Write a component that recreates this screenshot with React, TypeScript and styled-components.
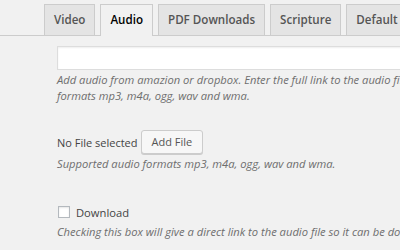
import React from "react";
import styled, { createGlobalStyle } from "styled-components";

const Global = createGlobalStyle`
  html, body { margin: 0; padding: 0; }
  body {
    background: #f1f1f1;
    font-family: "Open Sans", "Noto Sans", sans-serif;
    color: #444;
    overflow: hidden;
    width: 400px;
    height: 250px;
  }
`;

const Page = styled.div`
  width: 400px;
  height: 250px;
  overflow: hidden;
`;

const TabBar = styled.nav`
  display: flex;
  gap: 5px;
  padding: 4px 0 0 44px;
  border-bottom: 1px solid #ccc;
  white-space: nowrap;
  height: 31px;
`;

const Tab = styled.div<{ $active?: boolean }>`
  flex: none;
  box-sizing: border-box;
  padding: 0 9px;
  line-height: 30px;
  font-size: 11.6px;
  font-weight: 600;
  border: 1px solid #ccc;
  border-bottom: none;
  background: ${(p) => (p.$active ? "#f1f1f1" : "#e4e4e4")};
  color: ${(p) => (p.$active ? "#000" : "#555")};
  margin-bottom: ${(p) => (p.$active ? "-1px" : "0")};
  height: ${(p) => (p.$active ? "32px" : "31px")};
`;

const Content = styled.div`
  padding: 10px 0 0 57px;
  white-space: nowrap;
`;

const UrlInput = styled.input`
  display: block;
  width: 400px;
  height: 24px;
  box-sizing: border-box;
  border: 1px solid #ddd;
  background: #fff;
  box-shadow: inset 0 1px 2px rgba(0, 0, 0, 0.07);
  margin: 0;
  padding: 0 6px;
  outline: none;
`;

const Desc = styled.p<{ $top?: number }>`
  margin: ${(p) => p.$top ?? 2}px 0 0;
  font-size: 11.2px;
  line-height: 16px;
  font-style: italic;
  color: #6e6e6e;
`;

const FileRow = styled.div`
  display: flex;
  align-items: center;
  gap: 3px;
  margin-top: 26px;
  font-size: 11px;
  color: #444;
`;

const Button = styled.button`
  height: 24px;
  box-sizing: border-box;
  padding: 0 10px;
  border: 1px solid #ccc;
  border-radius: 3px;
  background: #f7f7f7;
  box-shadow: 0 1px 0 #ccc;
  font-family: inherit;
  font-size: 11px;
  color: #555;
  line-height: 22px;
`;

const CheckRow = styled.label`
  display: flex;
  align-items: center;
  gap: 6px;
  margin-top: 32px;
  height: 16px;
  font-size: 11.2px;
  color: #444;
`;

const Check = styled.input`
  appearance: none;
  margin: 0 0 0 1px;
  width: 12px;
  height: 12px;
  box-sizing: border-box;
  border: 1px solid #b4b9be;
  background: #fff;
  box-shadow: inset 0 1px 2px rgba(0, 0, 0, 0.1);
`;

export default function App() {
  return (
    <Page>
      <Global />
      <TabBar>
        <Tab>Video</Tab>
        <Tab $active>Audio</Tab>
        <Tab>PDF Downloads</Tab>
        <Tab>Scripture</Tab>
        <Tab>Default Media</Tab>
      </TabBar>
      <Content>
        <UrlInput type="text" />
        <Desc>
          Add audio from amazion or dropbox. Enter the full link to the audio file. Supported
          <br />
          formats mp3, m4a, ogg, wav and wma.
        </Desc>
        <FileRow>
          <span>No File selected</span>
          <Button>Add File</Button>
        </FileRow>
        <Desc>Supported audio formats mp3, m4a, ogg, wav and wma.</Desc>
        <CheckRow>
          <Check type="checkbox" />
          <span>Download</span>
        </CheckRow>
        <Desc $top={4}>
          Checking this box will give a direct link to the audio file so it can be downloaded.
        </Desc>
      </Content>
    </Page>
  );
}
